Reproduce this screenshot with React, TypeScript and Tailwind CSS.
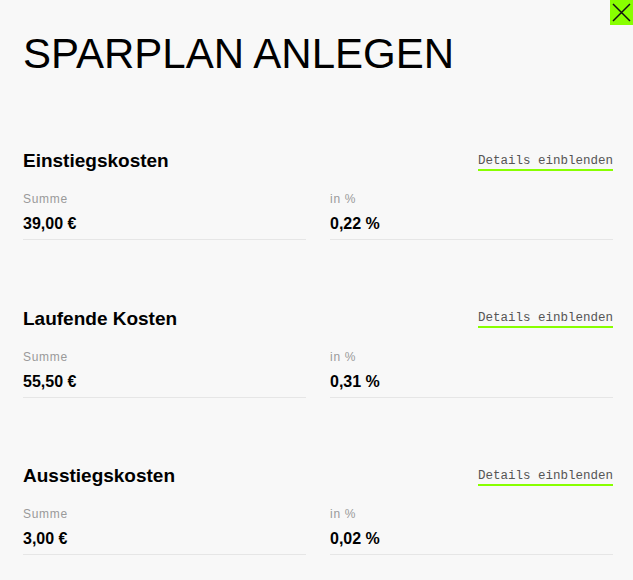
import React from "react";

type Section = {
	title: string;
	sum: string;
	percent: string;
};

const sections: Section[] = [
	{ title: "Einstiegskosten", sum: "39,00 €", percent: "0,22 %" },
	{ title: "Laufende Kosten", sum: "55,50 €", percent: "0,31 %" },
	{ title: "Ausstiegskosten", sum: "3,00 €", percent: "0,02 %" },
];

const Cell = ({ label, value }: { label: string; value: string }) => (
	<div className="border-b border-[#e6e6e6] pb-[5px]">
		<div className="text-[12px] leading-[16px] tracking-[0.06em] text-[#9a9a9a]">
			{label}
		</div>
		<div className="mt-[7px] text-[16px] leading-[20px] font-bold text-black">
			{value}
		</div>
	</div>
);

const App = () => {
	return (
		<div
			className="relative min-h-[580px] w-full bg-[#f8f8f8] pl-[23px] pr-[20px] pt-[30px]"
			style={{ fontFamily: '"Liberation Sans", Arial, sans-serif' }}
		>
			<button className="absolute right-0 top-0 flex h-[25px] w-[23px] items-center justify-center bg-[#88ff00]">
				<svg width="19" height="19" viewBox="0 0 19 19">
					<path d="M1 1L18 18M18 1L1 18" stroke="#111" strokeWidth="1.5" />
				</svg>
			</button>

			<h1 className="text-[42px] leading-[48px] font-normal text-black">
				SPARPLAN ANLEGEN
			</h1>

			<div className="mt-[71px] flex flex-col gap-[66.5px]">
				{sections.map((s) => (
					<section key={s.title}>
						<div className="flex items-center justify-between">
							<h2 className="text-[19px] leading-[24px] font-bold text-black">
								{s.title}
							</h2>
							<a
								href="#"
								className="mt-[2px] border-b-2 border-[#88ff00] text-[12.5px] leading-[15px] text-[#555]"
								style={{ fontFamily: '"Liberation Mono", "DejaVu Sans Mono", monospace' }}
							>
								Details einblenden
							</a>
						</div>
						<div className="mt-[18px] grid grid-cols-2 gap-[24px]">
							<Cell label="Summe" value={s.sum} />
							<Cell label="in %" value={s.percent} />
						</div>
					</section>
				))}
			</div>
		</div>
	);
};

export default App;
